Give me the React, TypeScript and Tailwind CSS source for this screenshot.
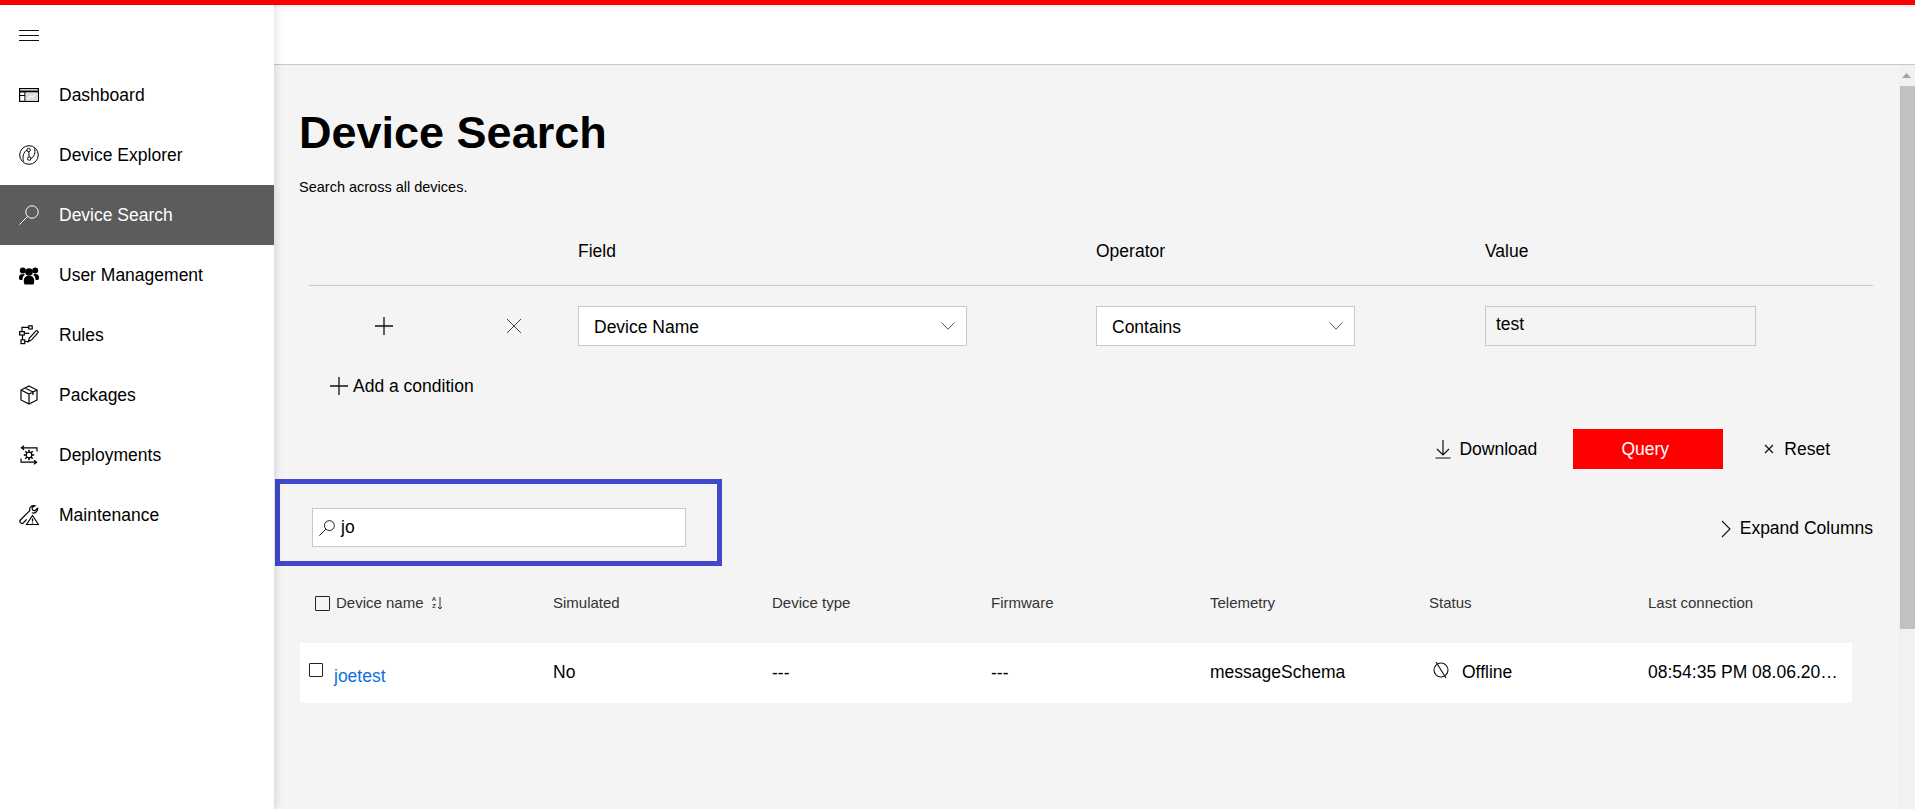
import React from "react";

const S = { fill: "none", stroke: "currentColor", strokeWidth: 1.2 } as const;

const DashIcon = () => (
  <svg width="20" height="20" viewBox="0 0 20 20" {...S}>
    <rect x="0.6" y="3.6" width="18.8" height="12.8" />
    <path d="M0.6 6.5h18.8" strokeWidth="2" />
    <path d="M6 6.5v9.9M0.6 10.5H6" />
    <rect x="6.6" y="7.6" width="12.2" height="8.2" fill="#d7dde4" stroke="none" />
    <path d="M8.5 14l3-3 2 1.5 3-3.5" stroke="#f4f6f8" />
  </svg>
);
const ExplorerIcon = () => (
  <svg width="20" height="20" viewBox="0 0 20 20" fill="none" stroke="currentColor" strokeWidth="1">
    <circle cx="10" cy="10" r="9.3" />
    <circle cx="9.6" cy="5" r="1.7" />
    <circle cx="10.2" cy="13.6" r="1.7" />
    <path d="M8 5.2C4.600 6.800 3.200 11.500 4.500 16.200M11.900 13.400c3.400-1.400 4.800-6.200 3.600-10M9.800 6.700l.3 5.200" />
  </svg>
);
const UsersIcon = () => (
  <svg width="20" height="20" viewBox="0 0 20 20" fill="currentColor">
    <circle cx="10" cy="7" r="3.8" />
    <circle cx="3.8" cy="5.500" r="3" />
    <circle cx="16.200" cy="5.500" r="3" />
    <path d="M4.800 15.500c0-3.200 2-4.800 5.200-4.800s5.200 1.600 5.200 4.800c0 1.800-.4 4-1 4H5.800c-.6 0-1-2.200-1-4z" />
    <path d="M0 12.500C0 10 1.400 9 3.800 9c1 0 1.600.2 2.200.6C4.400 10.800 3.400 12.600 3.400 15H1.200C.4 15 0 13.800 0 12.500z" />
    <path d="M20 12.500C20 10 18.600 9 16.200 9c-1 0-1.600.2-2.200.6 1.600 1.200 2.600 3 2.600 5.400h2.200c.8 0 1.200-1.200 1.200-2.500z" />
  </svg>
);
const SearchGlyph = ({ size = 20, sw = 1 }: { size?: number; sw?: number }) => (
  <svg width={size} height={size} viewBox="0 0 20 20" fill="none" stroke="currentColor" strokeWidth={sw}>
    <circle cx="13" cy="7" r="6.2" />
    <path d="M8.600 11.400L0.400 19.600" />
  </svg>
);
const RulesIcon = () => (
  <svg width="20" height="20" viewBox="0 0 20 20" {...S}>
    <rect x="9.800" y="0.800" width="3.400" height="3.200" />
    <rect x="0.700" y="6.600" width="4.600" height="3.400" />
    <rect x="2" y="14.800" width="3.800" height="3.800" />
    <path d="M9.800 2.400H3v4.200M3.500 10v4.800M5.800 16.500h3.400M5.300 8.300h5" />
    <path d="M9.200 16.800l1.200-3.800 6.600-7.200c.8-.8 2.800.9 2 1.900l-6.400 7.200z" />
  </svg>
);
const PackageIcon = () => (
  <svg width="20" height="20" viewBox="0 0 20 20" {...S}>
    <path d="M10 1l8 4v10l-8 4-8-4V5zM2 5l8 4 8-4M10 9v10M6 3l8 4v3" />
  </svg>
);
const DeployIcon = () => (
  <svg width="20" height="20" viewBox="0 0 20 20" {...S}>
    <path d="M5 0.800L2.400 2.800 5 4.800M2.400 2.800H18v3.800M15 19.200l2.600-2-2.600-2M17.600 17.200H2v-3.800" />
    <circle cx="10" cy="10" r="2.800" />
    <path d="M10 4.800v2.400M10 12.800v2.400M4.800 10h2.400M12.800 10h2.400M6.300 6.300L8 8M12 12l1.700 1.700M13.700 6.300L12 8M8 12l-1.700 1.700" strokeWidth="1.500" />
  </svg>
);
const MaintIcon = () => (
  <svg width="20" height="20" viewBox="0 0 20 20" {...S}>
    <path d="M18.800 2.800l-3 3-2.200-.8-.6-2.200 3-2c-3.200-.9-6 1.600-5.200 4.800L1.400 15c-1.600 1.800.8 4.400 2.800 3l3.500-3.600M12.800 7.800c2.800 1 6-.8 6-5" />
    <path d="M13.500 10.500l6 9h-12z" />
    <path d="M13.500 13.500v3M13.500 17.500v1" />
  </svg>
);

const items: { label: string; icon: React.ReactNode; active?: boolean }[] = [
  { label: "Dashboard", icon: <DashIcon /> },
  { label: "Device Explorer", icon: <ExplorerIcon /> },
  { label: "Device Search", icon: <SearchGlyph />, active: true },
  { label: "User Management", icon: <UsersIcon /> },
  { label: "Rules", icon: <RulesIcon /> },
  { label: "Packages", icon: <PackageIcon /> },
  { label: "Deployments", icon: <DeployIcon /> },
  { label: "Maintenance", icon: <MaintIcon /> },
];

const Chevron = () => (
  <svg width="14" height="8" viewBox="0 0 14 8" fill="none" stroke="#555" strokeWidth="1">
    <path d="M0.500 0.500L7 7.200 13.500 0.500" />
  </svg>
);
const Plus = ({ size = 20 }: { size?: number }) => (
  <svg width={size} height={size} viewBox="0 0 20 20" stroke="#111" strokeWidth="1.300">
    <path d="M10 1v18M1 10h18" />
  </svg>
);

const cols = ["Simulated", "Device type", "Firmware", "Telemetry", "Status"];

export default function App() {
  return (
    <div className="h-[809px] w-[1915px] overflow-hidden flex flex-col bg-[#f4f4f4] text-black font-['Liberation_Sans',Arial,sans-serif] text-[17.5px]">
      <div className="h-[5px] shrink-0 bg-[#ff0000]" />
      <div className="flex flex-1 min-h-0">
        <aside className="w-[274px] shrink-0 bg-white shadow-[2px_0_8px_rgba(0,0,0,0.12)] z-10">
          <div className="h-[60px] flex items-start pl-[19px] pt-[25px]">
            <svg width="20" height="12" viewBox="0 0 20 12" stroke="#111" strokeWidth="1">
              <path d="M0 0.500h20M0 5.500h20M0 10.500h20" />
            </svg>
          </div>
          {items.map((it) => (
            <div
              key={it.label}
              className={`h-[60px] flex items-center pl-[19px] gap-[20px] ${it.active ? "bg-[#5c5c5c] text-white" : "text-black"}`}
            >
              <span className="w-[20px] h-[20px] flex items-center justify-center shrink-0">{it.icon}</span>
              <span>{it.label}</span>
            </div>
          ))}
        </aside>
        <main className="flex-1 min-w-0 flex flex-col">
          <header className="h-[60px] shrink-0 bg-white border-b border-[#c8c8c8] shadow-[inset_0_6px_6px_-6px_rgba(0,0,0,0.15)]" />
          <div className="flex flex-1 min-h-0">
            <div className="flex-1 min-w-0 pl-[26px] pr-[25px]">
              <h1 className="mt-[40px] -ml-px text-[45px] leading-[56px] font-bold">Device Search</h1>
              <p className="mt-[16px] -ml-px text-[14.5px] leading-[20px]">Search across all devices.</p>

              <div className="mt-[36px] ml-[9px]">
                <div className="h-[53px] flex items-center border-b border-[#c8c8c8] pb-[15px]">
                  <span className="ml-[269px] w-[518px]">Field</span>
                  <span className="w-[389px]">Operator</span>
                  <span>Value</span>
                </div>
                <div className="mt-[20px] flex items-center h-[40px]">
                  <span className="ml-[65px] w-[20px] flex justify-center"><Plus /></span>
                  <span className="ml-[111px] w-[18px] flex justify-center">
                    <svg width="16" height="16" viewBox="0 0 16 16" stroke="#444" strokeWidth="1"><path d="M1 1l14 14M15 1L1 15" /></svg>
                  </span>
                  <div className="ml-[55px] w-[389px] h-[40px] bg-white border border-[#c8c8c8] flex items-center justify-between pl-[15px] pr-[11px]">
                    <span className="mt-[2px]">Device Name</span><Chevron />
                  </div>
                  <div className="ml-[129px] w-[259px] h-[40px] bg-white border border-[#c8c8c8] flex items-center justify-between pl-[15px] pr-[11px]">
                    <span className="mt-[2px]">Contains</span><Chevron />
                  </div>
                  <div className="ml-[130px] w-[271px] h-[40px] border border-[#c8c8c8] flex items-center pl-[10px] pb-[3px]">test</div>
                </div>
                <div className="mt-[28px] ml-[20px] flex items-center gap-[4px] h-[24px]">
                  <Plus size={20} />
                  <span>Add a condition</span>
                </div>
              </div>

              <div className="mt-[31px] h-[40px] flex items-center justify-end pr-[43px]">
                <svg className="mr-[8px]" width="16" height="20" viewBox="0 0 16 20" fill="none" stroke="#111" strokeWidth="1.200">
                  <path d="M8 1v15M2 10l6 6 6-6M0.500 19h15" />
                </svg>
                <span>Download</span>
                <button className="ml-[36px] w-[150px] h-[40px] pr-[6px] bg-[#ff0000] text-white">Query</button>
                <svg className="ml-[41px] mr-[10px]" width="10" height="10" viewBox="0 0 10 10" stroke="#111" strokeWidth="1.200"><path d="M1 1l8 8M9 1L1 9" /></svg>
                <span>Reset</span>
              </div>

              <div className="mt-[10px] -ml-[25px] flex items-center justify-between">
                <div className="w-[447px] h-[87px] border-[5px] border-[#4048cc] flex items-center pl-[32px] pt-[10px]">
                  <div className="w-[374px] h-[39px] bg-white border border-[#c8c8c8] flex items-center pl-[6px] gap-[6px]">
                    <SearchGlyph size={16} sw={1.100} /><span>jo</span>
                  </div>
                </div>
                <div className="flex items-center gap-[9px] pt-[12px]">
                  <svg width="10" height="18" viewBox="0 0 10 18" fill="none" stroke="#111" strokeWidth="1.100"><path d="M1 1l8 8-8 8" /></svg>
                  <span>Expand Columns</span>
                </div>
              </div>

              <div className="mt-[24px] flex items-center h-[26px] text-[15px] text-[#333] pl-[15px]">
                <span className="w-[15px] h-[15px] border border-[#222] rounded-[1px] mr-[6px]" />
                <span className="w-[95px]">Device name</span>
                <span className="w-[6px] flex flex-col items-center text-[6px] leading-[7px] font-bold">
                  <span>A</span>
                  <span>Z</span>
                </span>
                <svg className="w-[6px] h-[14px]" viewBox="0 0 6 14" fill="none" stroke="#333" strokeWidth="1">
                  <path d="M3 1v12M1 11l2 2 2-2" />
                </svg>
                <span className="w-[110px]" />
                {cols.map((c) => (
                  <span key={c} className="w-[219px]">{c}</span>
                ))}
                <span>Last connection</span>
              </div>

              <div className="mt-[27px] w-[1552px] h-[60px] bg-white flex items-center pl-[9px]">
                <span className="w-[14px] h-[14px] border border-[#222] rounded-[1px] mr-[11px] -mt-[6px]" />
                <a className="w-[219px] text-[#0f6fdc] mt-[7px]">joetest</a>
                <span className="w-[219px] -mt-[2px]">No</span>
                <span className="w-[219px]">---</span>
                <span className="w-[219px]">---</span>
                <span className="w-[219px] -mt-[2px]">messageSchema</span>
                <span className="w-[219px] flex items-center pl-[4px] gap-[13px] -mt-[2px]">
                  <svg className="-mt-[4px]" width="16" height="18" viewBox="0 0 16 18" fill="none" stroke="#111" strokeWidth="1.100">
                    <circle cx="8" cy="9" r="7" /><path d="M3 1l10 16" />
                  </svg>
                  <span>Offline</span>
                </span>
                <span className="whitespace-nowrap -mt-[2px]">08:54:35 PM 08.06.20…</span>
              </div>
            </div>
            <div className="w-[17px] shrink-0 bg-[#f1f1f1] flex flex-col">
              <div className="h-[21px] flex items-center justify-center">
                <svg width="9" height="5" viewBox="0 0 9 5" fill="#a3a3a3"><path d="M4.500 0L9 5H0z" /></svg>
              </div>
              <div className="h-[543px] ml-[2px] bg-[#c1c1c1]" />
            </div>
          </div>
        </main>
      </div>
    </div>
  );
}
